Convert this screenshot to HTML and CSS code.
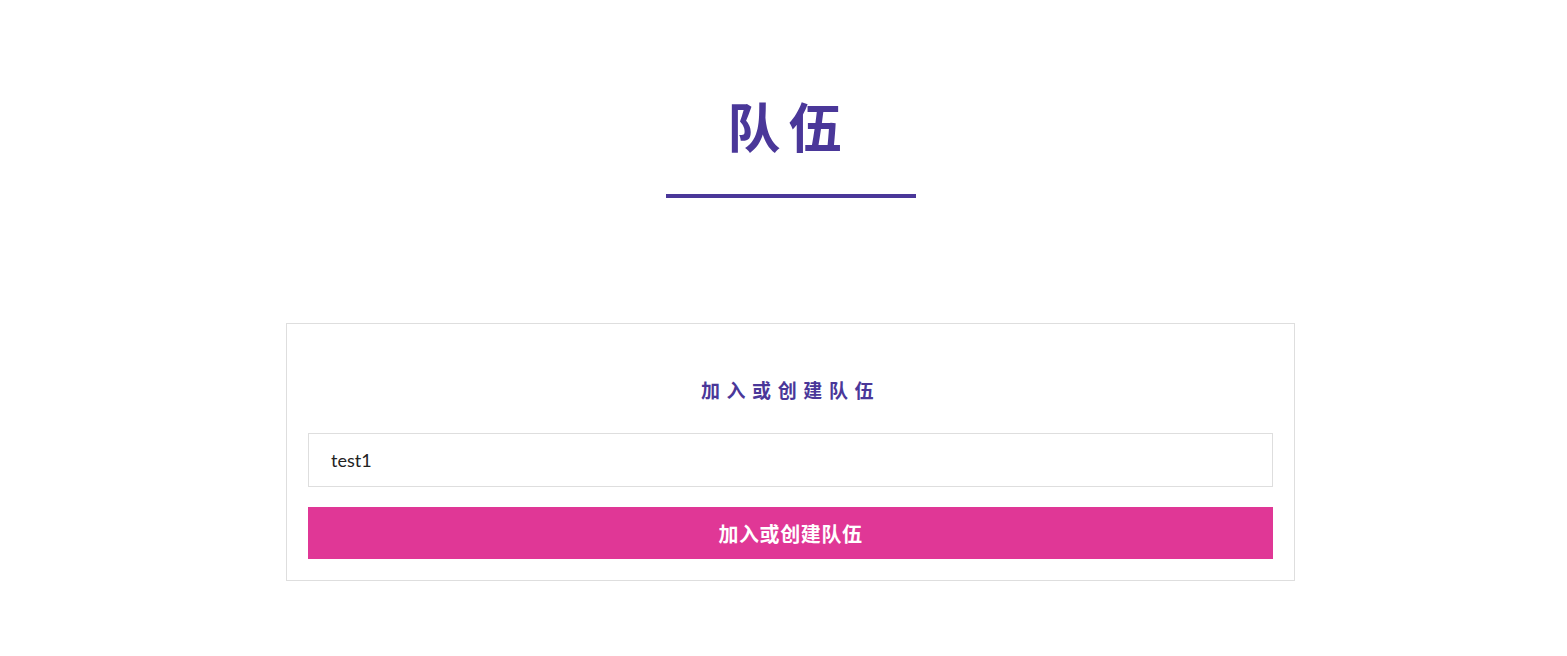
FILE: index.html
```html
<!DOCTYPE html>
<html lang="zh">
<head>
<meta charset="utf-8">
<title>队伍</title>
<link rel="stylesheet" href="styles.css">
</head>
<body>
<div class="page">
  <header class="jumbo">
    <h1 class="title">队伍</h1>
    <div class="rule"></div>
  </header>
  <section class="card">
    <h2 class="card-title">加入或创建队伍</h2>
    <div class="field">test1</div>
    <button class="btn" type="button">加入或创建队伍</button>
  </section>
</div>
</body>
</html>
```

FILE: styles.css
```css
* { box-sizing: border-box; }
html, body { margin: 0; padding: 0; background: #fff; }
body {
  font-family: Lato, "Noto Sans CJK SC", "Noto Sans", sans-serif;
  color: #212529;
}
.page {
  padding-left: 14px;
  display: flex;
  flex-direction: column;
  align-items: center;
}
.jumbo {
  display: flex;
  flex-direction: column;
  align-items: center;
  padding-top: 85px;
}
.title {
  margin: 0;
  font-family: "Noto Sans CJK SC", sans-serif;
  font-size: 53px;
  font-weight: 700;
  line-height: 80px;
  letter-spacing: 8px;
  padding-right: 4px;
  color: #4a3799;
}
.rule {
  width: 250px;
  height: 4px;
  background: #4a3799;
  margin-top: 29px;
}
.card {
  margin-top: 125px;
  width: 1009px;
  border: 1px solid #dedede;
  padding: 21px;
  display: flex;
  flex-direction: column;
}
.card-title {
  margin: 32px 0 30px;
  text-align: center;
  font-family: "Noto Sans CJK SC", sans-serif;
  font-size: 19px;
  font-weight: 700;
  line-height: 26px;
  letter-spacing: 6.6px;
  color: #4a3799;
}
.field {
  height: 54px;
  border: 1px solid #dedede;
  padding: 0 22px;
  display: flex;
  align-items: center;
  font-family: Lato, sans-serif;
  font-size: 18px;
  color: #222;
}
.btn {
  margin-top: 20px;
  height: 52px;
  border: 0;
  background: #e03796;
  color: #fff;
  font-family: "Noto Sans CJK SC", sans-serif;
  font-size: 20px;
  font-weight: 700;
  letter-spacing: 0.6px;
  padding: 0;
}
```
